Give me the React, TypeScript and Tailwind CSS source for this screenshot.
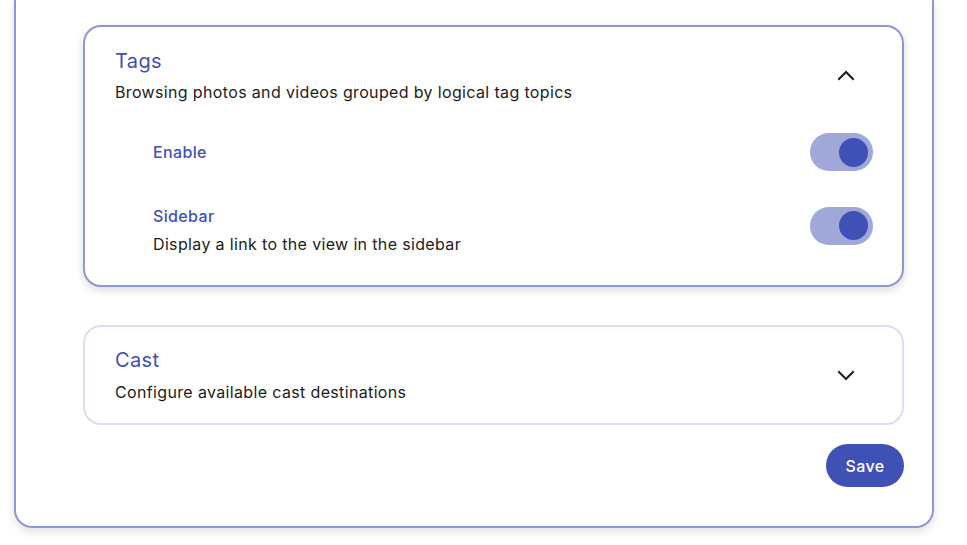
import { useState } from 'react'

const font = { fontFamily: 'Inter, "Noto Sans", sans-serif' }

function Toggle({ on, onChange }: { on: boolean; onChange: () => void }) {
  return (
    <button
      onClick={onChange}
      className={`relative w-[63px] h-[38px] rounded-full shrink-0 ${on ? 'bg-[#a0a7d9]' : 'bg-[#d5d7e6]'}`}
    >
      <span
        className={`absolute top-[4.5px] w-[29px] h-[29px] rounded-full ${on ? 'right-[5px] bg-[#3f51b5]' : 'left-[5px] bg-white'}`}
      />
    </button>
  )
}

function Chevron({ up }: { up?: boolean }) {
  return (
    <svg width="18" height="12" viewBox="0 0 18 12" fill="none" className="text-[#1c1c1c]">
      <path
        d={up ? 'M2 10 L9 3 L16 10' : 'M2 2 L9 9 L16 2'}
        stroke="currentColor"
        strokeWidth="2"
        strokeLinecap="square"
      />
    </svg>
  )
}

export default function App() {
  const [enable, setEnable] = useState(true)
  const [sidebar, setSidebar] = useState(true)
  const [tagsOpen, setTagsOpen] = useState(true)

  return (
    <div className="min-h-screen bg-white pb-[16px] tracking-[0.35px]" style={font}>
      <div className="ml-[14px] w-[920px] border-2 border-t-0 border-[#8e96d5] rounded-b-[18px] shadow-[0_4px_8px_rgba(0,0,0,0.12)] pt-[25px] pb-[39px] pl-[67px] pr-[28px]">

        {/* Tags */}
        <div className="border-2 border-[#8e96d5] rounded-[18px] shadow-[0_3px_8px_rgba(0,0,0,0.15)] pl-[30px] pr-[29px] pt-[20px] pb-[29px]">
          <div className="flex items-center justify-between cursor-pointer" onClick={() => setTagsOpen(!tagsOpen)}>
            <div>
              <div className="text-[20px] leading-[28px] text-[#3f51b5]">Tags</div>
              <div className="text-[16px] leading-[26px] text-[#1c1c1c] mt-[4px]">
                Browsing photos and videos grouped by logical tag topics
              </div>
            </div>
            <div className="w-[36px] flex justify-center mr-[9px] mb-[2px]">
              <Chevron up={tagsOpen} />
            </div>
          </div>

          {tagsOpen && (
            <div className="pl-[38px] mt-[28px] flex flex-col gap-[33px]">
              <div className="flex items-center justify-between">
                <div className="text-[16px] leading-[24px] font-medium text-[#3f51b5]">Enable</div>
                <Toggle on={enable} onChange={() => setEnable(!enable)} />
              </div>
              <div className="flex items-center justify-between">
                <div>
                  <div className="text-[16px] leading-[24px] font-medium text-[#3f51b5]">Sidebar</div>
                  <div className="text-[16px] leading-[24px] text-[#1c1c1c] mt-[4px]">Display a link to the view in the sidebar</div>
                </div>
                <div className="mb-[3px]">
                  <Toggle on={sidebar} onChange={() => setSidebar(!sidebar)} />
                </div>
              </div>
            </div>
          )}
        </div>

        {/* Cast */}
        <div className="mt-[38px] border-2 border-[#dcdef2] rounded-[18px] pl-[30px] pr-[29px] pt-[19px] pb-[18px] flex items-center justify-between">
          <div>
            <div className="text-[20px] leading-[28px] text-[#3f51b5]">Cast</div>
            <div className="text-[16px] leading-[26px] text-[#1c1c1c] mt-[5px]">Configure available cast destinations</div>
          </div>
          <div className="w-[36px] flex justify-center mr-[9px]">
            <Chevron />
          </div>
        </div>

        <div className="flex justify-end mt-[19px]">
          <button className="w-[78px] h-[43px] rounded-full bg-[#3f51b5] text-white text-[16px] font-medium">
            Save
          </button>
        </div>
      </div>
    </div>
  )
}
